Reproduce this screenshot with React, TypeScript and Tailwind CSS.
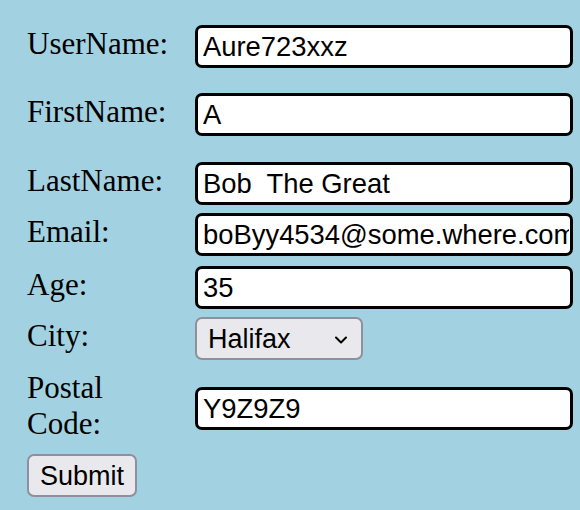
import React from "react";

const inputCls =
  "box-border w-[378px] h-[43px] border-[3px] border-black rounded-[7px] bg-white pl-[5px] pr-[1px] text-[27.4px] text-black outline-none";

function Row({ label, mt, children }: { label: React.ReactNode; mt: string; children: React.ReactNode }) {
  return (
    <div className={`flex h-[43px] items-center ${mt}`}>
      <div className="w-[168px] shrink-0 mb-[5px] text-[31px] leading-[36px] text-black" style={{ fontFamily: '"Liberation Serif", "Times New Roman", serif' }}>
        {label}
      </div>
      {children}
    </div>
  );
}

export default function App() {
  return (
    <div
      className="w-[580px] h-[510px] bg-[#a2d2e2] pl-[27px] pt-[25px] overflow-hidden"
      style={{ fontFamily: '"Liberation Sans", Arial, sans-serif' }}
    >
      <Row label="UserName:" mt="mt-0">
        <input className={inputCls} defaultValue="Aure723xxz" />
      </Row>
      <Row label="FirstName:" mt="mt-[25px]">
        <input className={inputCls} defaultValue="A" />
      </Row>
      <Row label="LastName:" mt="mt-[26px]">
        <input className={inputCls} defaultValue="Bob  The Great" style={{ whiteSpace: "pre" }} />
      </Row>
      <Row label="Email:" mt="mt-[8px]">
        <input className={inputCls} defaultValue="boByy4534@some.where.com" />
      </Row>
      <Row label="Age:" mt="mt-[10px]">
        <input className={inputCls} defaultValue="35" />
      </Row>
      <Row label="City:" mt="mt-[8px]">
        <div className="relative">
          <select
            className="box-border w-[168px] h-[43px] appearance-none bg-[#e9e8ed] border-2 border-[#8f8f9d] rounded-[7px] pl-[11px] text-[27px] text-black outline-none"
            defaultValue="Halifax"
          >
            <option>Halifax</option>
            <option>Toronto</option>
          </select>
          <svg
            className="absolute left-[140px] top-[19px] pointer-events-none"
            width="12"
            height="8"
            viewBox="0 0 12 8"
          >
            <path d="M1 1.5 L6 6.5 L11 1.5" fill="none" stroke="#000" strokeWidth="2" strokeLinecap="round" strokeLinejoin="round" />
          </svg>
        </div>
      </Row>
      <Row
        label={
          <>
            Postal
            <br />
            Code:
          </>
        }
        mt="mt-[27px]"
      >
        <input className={inputCls} defaultValue="Y9Z9Z9" />
      </Row>
      <div className="mt-[24px]">
        <button
          type="button"
          className="box-border w-[110px] h-[43px] bg-[#e9e8ed] border-2 border-[#8f8f9d] rounded-[7px] text-[27px] text-black"
        >
          Submit
        </button>
      </div>
    </div>
  );
}
